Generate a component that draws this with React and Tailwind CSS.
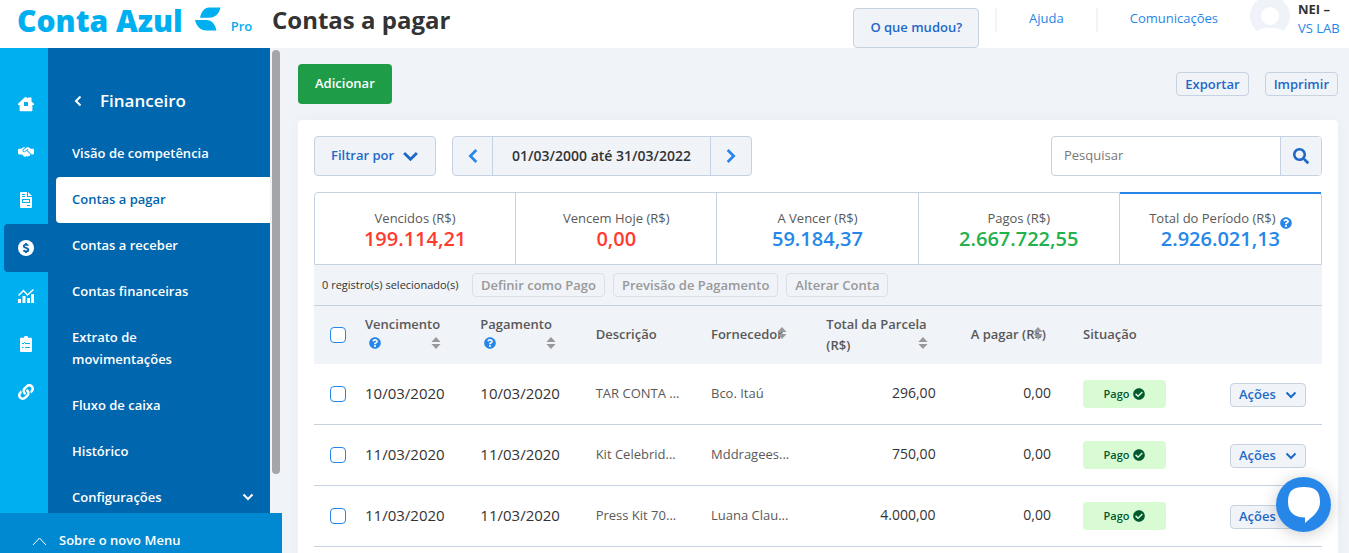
import React from 'react';
import { FaSearch, FaQuestionCircle, FaCheckCircle, FaLink } from 'react-icons/fa';
import { FaHandshakeSimple } from 'react-icons/fa6';

const HomeIcon = () => (
  <svg width="16" height="16" viewBox="0 0 16 16" fill="currentColor" aria-hidden="true">
    <path fillRule="evenodd" d="M8 1 10 2.6V1.6h3.5v3.8L16 7.8V9h-1.600v5.200a1 1 0 0 1-1 1H2.600a1 1 0 0 1-1-1V9H0V7.800L6.600 1.500ZM6 6v4h4V6Z" />
  </svg>
);

const DocIcon = () => (
  <svg width="16" height="16" viewBox="0 0 16 16" fill="currentColor" aria-hidden="true">
    <path fillRule="evenodd" d="M3 0h6v5h5v10a1 1 0 0 1-1 1H3a1 1 0 0 1-1-1V1a1 1 0 0 1 1-1ZM4 2v1h3V2ZM4 4v1h3V4ZM4 7v4h8V7ZM5 8h6v2H5ZM9 13v1h3v-1Z" />
    <path d="M10 0l4 4h-4Z" />
  </svg>
);

const MoneyIcon = () => (
  <svg width="16" height="16" viewBox="0 0 16 16" aria-hidden="true">
    <circle cx="8" cy="8" r="8" fill="currentColor" />
    <path d="M10.200 5.700C9.800 4.900 9 4.600 8 4.600c-1.300 0-2.200.6-2.200 1.600 0 2.300 4.500 1.200 4.500 3.500 0 1.100-1 1.700-2.300 1.700-1.100 0-2-.4-2.400-1.300M8 2.900v1.700M8 11.400v1.700" fill="none" stroke="#0066ae" strokeWidth="1.900" />
  </svg>
);

const ChartIcon = () => (
  <svg width="16" height="16" viewBox="0 0 16 16" aria-hidden="true">
    <path d="M0 11h3v4H0ZM4.500 8h3v7h-3ZM9 10h3v5H9ZM13 6h3v9h-3Z" fill="currentColor" />
    <path d="M.5 7.500 5.500 2.500l4 4.500L15.500 1.500" fill="none" stroke="currentColor" strokeWidth="1.500" />
  </svg>
);

const ClipboardIcon = () => (
  <svg width="16" height="16" viewBox="0 0 16 16" aria-hidden="true">
    <path d="M3 1.700h3a2 2 0 0 1 4 0h3a1 1 0 0 1 1 1V15a1 1 0 0 1-1 1H3a1 1 0 0 1-1-1V2.700a1 1 0 0 1 1-1Z" fill="currentColor" />
    <path d="M7 7.500h5M7 11.500h5M4 11.500h1.500M4 7l1 1 2-2" fill="none" stroke="#00aff0" />
  </svg>
);

const SortIcon = () => (
  <svg width="10" height="12" viewBox="0 0 10 12" fill="#999" aria-hidden="true">
    <path d="M5 0 9.600 5H.4ZM5 12 .4 7h9.200Z" />
  </svg>
);

const CHEVRONS = {
  down: 'M1.500 3.500 6 8l4.500-4.500',
  left: 'M8.500 1.500 4 6l4.500 4.500',
  right: 'M3.500 1.500 8 6l-4.500 4.500',
};

const Chevron = ({ dir, size }) => (
  <svg width={size} height={size} viewBox="0 0 12 12" fill="none" stroke="currentColor" strokeWidth="2" className="shrink-0" aria-hidden="true">
    <path d={CHEVRONS[dir]} />
  </svg>
);

const RAIL = [
  { label: 'Início', Icon: HomeIcon },
  { label: 'Vendas', Icon: FaHandshakeSimple },
  { label: 'Notas', Icon: DocIcon },
  { label: 'Financeiro', Icon: MoneyIcon, active: true },
  { label: 'Relatórios', Icon: ChartIcon },
  { label: 'Cadastros', Icon: ClipboardIcon },
  { label: 'Integrações', Icon: FaLink },
];

const MENU = [
  { label: 'Visão de competência' },
  { label: 'Contas a pagar', active: true },
  { label: 'Contas a receber' },
  { label: 'Contas financeiras' },
  { label: 'Extrato de movimentações' },
  { label: 'Fluxo de caixa' },
  { label: 'Histórico' },
  { label: 'Configurações', expandable: true },
];

const TOTALS = [
  { label: 'Vencidos (R$)', value: '199.114,21', color: 'text-[#ff3b30]' },
  { label: 'Vencem Hoje (R$)', value: '0,00', color: 'text-[#ff3b30]' },
  { label: 'A Vencer (R$)', value: '59.184,37', color: 'text-[#2687e9]' },
  { label: 'Pagos (R$)', value: '2.667.722,55', color: 'text-[#23b14d]' },
  { label: 'Total do Período (R$)', value: '2.926.021,13', color: 'text-[#2687e9]', active: true },
];

const ROWS = [
  { due: '10/03/2020', paid: '10/03/2020', text: 'TAR CONTA ...', supplier: 'Bco. Itaú', total: '296,00', open: '0,00' },
  { due: '11/03/2020', paid: '11/03/2020', text: 'Kit Celebrid...', supplier: 'Mddragees...', total: '750,00', open: '0,00' },
  { due: '11/03/2020', paid: '11/03/2020', text: 'Press Kit 70...', supplier: 'Luana Clau...', total: '4.000,00', open: '0,00' },
];

const Check = ({ label }) => (
  <input
    type="checkbox"
    aria-label={label}
    className="block size-4 appearance-none rounded border border-[#2687e9] bg-white checked:bg-[#2687e9]"
  />
);

function Header() {
  return (
    <header className="flex h-12 shrink-0 bg-white">
      <a href="#inicio" className="flex w-[254px] shrink-0 items-start pl-[17px] text-[#00aff0]">
        <span className="text-[30px] leading-[42px] font-extrabold whitespace-nowrap">Conta Azul</span>
        <svg className="mt-[7px] ml-3 shrink-0" width="26" height="24" viewBox="0 0 26 24" fill="currentColor" aria-hidden="true">
          <path d="M14 .5H25.500C24 6.500 20.500 10.800 14 10.800H5C6 5 9.500 .5 14 .5Z" />
          <path d="M0 13h11.500c5 0 8.500 4 10 10.500H11.500C5 23.500 1.500 19 0 13Z" />
        </svg>
        <span className="mt-4 ml-2.5 text-[13px] leading-5 font-semibold">Pro</span>
      </a>
      <h1 className="ml-[18px] text-2xl leading-10 font-bold whitespace-nowrap text-[#333]">Contas a pagar</h1>
      <div className="ml-auto flex items-start text-[13px] text-[#2687e9]">
        <button type="button" className="mt-2 h-10 rounded border border-[#c6d2df] bg-[#f0f3f8] px-4 font-semibold text-[#1e69c8]">
          O que mudou?
        </button>
        <span className="mt-2 ml-4 h-6 w-0.5 bg-[#f0f3f8]" />
        <a href="#ajuda" className="mt-2 px-8 leading-5">Ajuda</a>
        <span className="mt-2 h-6 w-0.5 bg-[#f0f3f8]" />
        <a href="#comunicacoes" className="mt-2 px-8 leading-5">Comunicações</a>
        <svg width="40" height="34" viewBox="0 4 40 34" className="shrink-0" aria-hidden="true">
          <circle cx="20" cy="20" r="20" fill="#eff2f8" />
          <circle cx="20" cy="20" r="9" fill="#fff" />
          <path d="M4 40c3-8 9-8 16-8s13 0 16 8Z" fill="#fff" />
        </svg>
        <div className="w-[59px] pl-2 leading-[19px] whitespace-nowrap">
          <div className="font-bold text-[#333]">NEI –</div>
          <a href="#empresa" className="block">VS LAB</a>
        </div>
      </div>
    </header>
  );
}

function Sidebar() {
  return (
    <aside className="flex w-[282px] shrink-0 flex-col text-white">
      <div className="flex min-h-0 flex-1 overflow-hidden">
        <nav aria-label="Módulos" className="w-12 shrink-0 bg-[#00aff0] pt-8">
          {RAIL.map(({ label, Icon, active }) => (
            <a
              key={label}
              href={'#' + label}
              aria-label={label}
              className={
                active
                  ? 'ml-1 flex h-12 items-center justify-center rounded-l bg-[#0066ae]'
                  : 'ml-1 flex h-12 items-center justify-center'
              }
            >
              <Icon size={16} />
            </a>
          ))}
        </nav>
        <nav aria-label="Financeiro" className="flex-1 bg-[#0066ae] pt-8 pl-2">
          <div className="mb-[9px] flex h-[42px] items-center gap-4 pl-4">
            <button type="button" aria-label="Voltar" className="w-3"><Chevron dir="left" size={12} /></button>
            <h2 className="text-[17px] font-semibold">Financeiro</h2>
          </div>
          {MENU.map((item) => (
            <a
              key={item.label}
              href={'#' + item.label}
              className={
                item.active
                  ? 'flex items-center rounded-l bg-white px-4 pt-[11px] pb-[13px] text-[13px] leading-[22px] font-semibold text-[#0066ae]'
                  : 'flex items-center justify-between px-4 pt-[11px] pb-[13px] text-[13px] leading-[22px] font-semibold'
              }
            >
              <span className="max-w-[150px]">{item.label}</span>
              {item.expandable && <Chevron dir="down" size={12} />}
            </a>
          ))}
        </nav>
        <div className="w-3 shrink-0 bg-[#f0f3f8] px-0.5 pt-0.5">
          <div className="h-11/12 rounded bg-[#a4a5a9]" />
        </div>
      </div>
      <button type="button" className="flex h-10 shrink-0 items-center gap-3 bg-[#0088d1] pt-4 pl-8 text-[13px] font-semibold">
        <svg width="15" height="9" viewBox="0 0 15 9" fill="none" stroke="currentColor" aria-hidden="true"><path d="m1 8 6.500-7L14 8" /></svg>
        Sobre o novo Menu
      </button>
    </aside>
  );
}

function Toolbar() {
  return (
    <div className="flex h-10 gap-4 text-[13px]">
      <button type="button" className="flex items-center gap-2 rounded border border-[#c6d2df] bg-[#f0f3f8] px-4 font-semibold text-[#1e69c8]">
        Filtrar por <Chevron dir="down" size={17} />
      </button>
      <div className="flex divide-x divide-[#c6d2df] rounded border border-[#c6d2df] bg-[#f0f3f8] text-[#2687e9]">
        <button type="button" aria-label="Período anterior" className="flex w-10 items-center justify-center"><Chevron dir="left" size={16} /></button>
        <button type="button" className="px-[19px] text-sm font-semibold text-[#333]">01/03/2000 até 31/03/2022</button>
        <button type="button" aria-label="Próximo período" className="flex w-10 items-center justify-center"><Chevron dir="right" size={16} /></button>
      </div>
      <form className="ml-auto flex w-[271px] divide-x divide-[#c6d2df] overflow-hidden rounded border border-[#c6d2df]">
        <input type="search" aria-label="Pesquisar" placeholder="Pesquisar" className="min-w-0 flex-1 px-3 outline-none placeholder:text-[#777]" />
        <button type="button" aria-label="Buscar" className="flex w-10 items-center justify-center bg-[#f0f3f8] text-[#1e69c8]"><FaSearch size={16} /></button>
      </form>
    </div>
  );
}

function Totals() {
  return (
    <div className="mt-4 grid grid-cols-5 rounded-t border border-[#c6d2df]">
      {TOTALS.map((t) => (
        <button
          key={t.label}
          type="button"
          className={
            t.active
              ? '-mt-px h-[72px] border-t-2 border-[#2687e9]'
              : 'h-[71px] border-r border-[#c6d2df]'
          }
        >
          <span className="flex h-5 items-center justify-center gap-1 text-[13px] whitespace-nowrap text-[#595959]">
            {t.label}
            {t.active && <FaQuestionCircle size={12} className="mt-2 text-[#2687e9]" />}
          </span>
          <span className={'block text-xl leading-5 font-semibold ' + t.color}>{t.value}</span>
        </button>
      ))}
    </div>
  );
}

function SelectionBar() {
  return (
    <div className="flex h-10 items-center gap-2 bg-[#f0f3f8] pl-2">
      <span className="min-w-[142px] text-[11px] whitespace-nowrap text-[#333]">0 registro(s) selecionado(s)</span>
      {['Definir como Pago', 'Previsão de Pagamento', 'Alterar Conta'].map((label) => (
        <button key={label} type="button" disabled className="h-6 rounded border border-[#d9e0e8] px-2 text-[13px] leading-5 font-semibold whitespace-nowrap text-[#999]">
          {label}
        </button>
      ))}
    </div>
  );
}

function BillsTable() {
  return (
    <table className="w-full table-fixed border-collapse text-left text-[13px] text-[#333]">
      <colgroup>
        <col className="w-12" />
        <col /><col /><col /><col /><col /><col />
        <col className="w-[140px]" />
        <col className="w-32" />
      </colgroup>
      <thead className="border-t border-[#c6d2df] bg-[#f0f3f8] text-[#595959]">
        <tr className="h-[58px] *:font-semibold">
          <th className="pl-4"><Check label="Selecionar todos" /></th>
          {['Vencimento', 'Pagamento'].map((label) => (
            <th key={label} className="px-[3px] leading-5">
              {label}
              <span className="flex h-[22px] w-[76px] items-center justify-between pb-1 pl-1">
                <FaQuestionCircle size={12} className="text-[#2687e9]" />
                <SortIcon />
              </span>
            </th>
          ))}
          <th className="px-[3px]">Descrição</th>
          <th className="relative px-[3px]">
            Fornecedor
            <span className="absolute top-[21px] right-9"><SortIcon /></span>
          </th>
          <th className="relative px-[3px] leading-[21px]">
            Total da Parcela (R$)
            <span className="absolute right-[11px] bottom-[15px]"><SortIcon /></span>
          </th>
          <th className="relative pr-2 text-right">
            A pagar (R$)
            <span className="absolute top-[21px] right-[11px]"><SortIcon /></span>
          </th>
          <th className="pl-[29px]">Situação</th>
          <th aria-label="Ações" />
        </tr>
      </thead>
      <tbody>
        {ROWS.map((r, i) => (
          <tr key={i} className="h-[61px] border-b border-[#c6d2df]">
            <td className="pl-4"><Check label={'Selecionar ' + r.text} /></td>
            <td className="px-[3px] pb-0.5 text-[15px]">{r.due}</td>
            <td className="px-[3px] pb-0.5 text-[15px]">{r.paid}</td>
            <td className="px-[3px] text-[#595959]">{r.text}</td>
            <td className="px-[3px] text-[#595959]">{r.supplier}</td>
            <td className="px-[3px] pb-0.5 text-right text-sm">{r.total}</td>
            <td className="px-[3px] pb-0.5 text-right text-sm">{r.open}</td>
            <td className="pl-[29px]">
              <span className="flex h-7 w-[83px] items-center justify-center gap-1 rounded-sm bg-[#d9fbd3] text-[11px] font-semibold text-[#00592f]">
                Pago <FaCheckCircle size={12} />
              </span>
            </td>
            <td className="pt-0.5 pr-4">
              <button type="button" className="ml-auto flex h-6 w-[76px] items-center justify-between rounded border border-[#c6d2df] bg-[#f0f3f8] px-2 font-semibold text-[#1e69c8]">
                Ações <Chevron dir="down" size={12} />
              </button>
            </td>
          </tr>
        ))}
      </tbody>
    </table>
  );
}

export default function App() {
  return (
    <div className="flex h-screen flex-col overflow-hidden bg-[#f0f3f8] font-['Open_Sans','Noto_Sans',sans-serif]">
      <Header />
      <div className="flex min-h-0 flex-1">
        <Sidebar />
        <main className="min-w-0 flex-1 overflow-hidden pt-4 pr-[11px] pl-4">
          <div className="flex items-center text-[13px] font-semibold">
            <button type="button" className="h-10 rounded-sm bg-[#1e9c47] px-[17px] text-white">Adicionar</button>
            <div className="ml-auto flex gap-4 text-[#1e69c8]">
              <button type="button" className="h-6 rounded border border-[#c6d2df] px-2 leading-5">Exportar</button>
              <button type="button" className="h-6 rounded border border-[#c6d2df] px-2 leading-5">Imprimir</button>
            </div>
          </div>
          <section className="mt-4 min-h-full rounded bg-white p-4 shadow-[0_0_16px_rgba(0,0,0,0.03)]">
            <Toolbar />
            <Totals />
            <SelectionBar />
            <BillsTable />
          </section>
        </main>
      </div>
      <button type="button" aria-label="Abrir conversa" className="fixed right-[18px] bottom-[21px] flex size-[55px] items-center justify-center rounded-full bg-[#2687e9] shadow-[0_2px_16px_rgba(0,0,0,0.2)]">
        <svg width="32" height="36" viewBox="0 0 32 36" fill="#fff" aria-hidden="true">
          <path d="M16 0C27 0 32 3.500 32 15c0 9-6 13.500-15 21v-5.500C6 30.500 0 25 0 15 0 3.500 5 0 16 0Z" />
        </svg>
      </button>
    </div>
  );
}
